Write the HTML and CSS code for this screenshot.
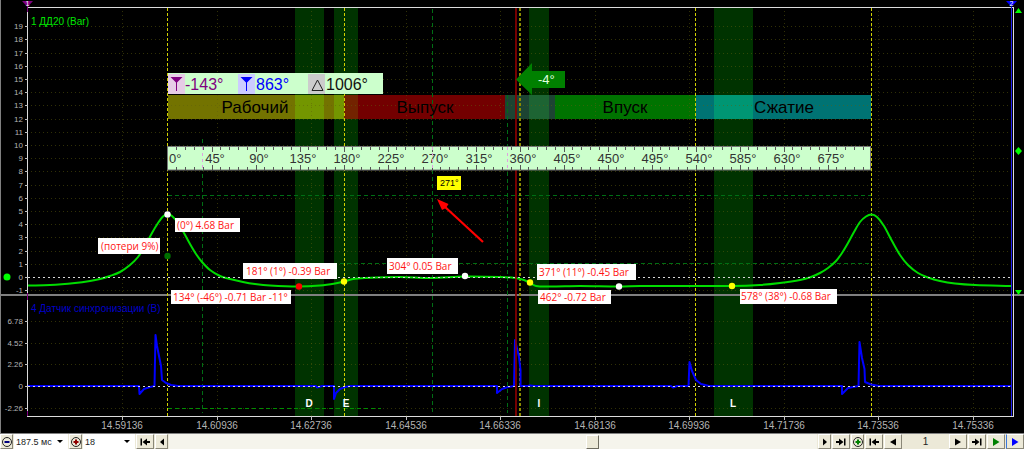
FILE: index.html
```html
<!DOCTYPE html>
<html lang="ru">
<head>
<meta charset="utf-8">
<title>Осциллограмма ДД20</title>
<link rel="stylesheet" href="styles.css">
</head>
<body>
<main class="scope">
  <svg class="plot" viewBox="0 0 1024 434" role="img" aria-label="Давление в цилиндре и синхронизация">
    <rect class="edge" x="0" y="0" width="1" height="434"/>
    <rect class="edge" x="0" y="433" width="1024" height="1"/>

    <g class="bands">
      <rect x="295" y="8" width="29" height="408"/>
      <rect x="334" y="8" width="24" height="408"/>
      <rect x="529" y="8" width="20" height="408"/>
      <rect x="714" y="8" width="39" height="408"/>
    </g>

    <g class="stages">
      <rect x="168" y="95" width="176" height="24" fill="#737300"/>
      <rect x="295" y="95" width="29" height="24" fill="#739600"/>
      <rect x="334" y="95" width="10" height="24" fill="#739600"/>
      <rect x="344" y="95" width="161" height="24" fill="#730000"/>
      <rect x="344" y="95" width="14" height="24" fill="#732300"/>
      <rect x="505" y="95" width="50" height="24" fill="#1d4433"/>
      <rect x="529" y="95" width="20" height="24" fill="#1d6433"/>
      <rect x="555" y="95" width="141" height="24" fill="#007300"/>
      <rect x="696" y="95" width="175" height="24" fill="#007373"/>
      <rect x="714" y="95" width="39" height="24" fill="#009673"/>
    </g>

    <g id="grid" class="grid"></g>
    <rect class="edge" x="0" y="294" width="1024" height="2"/>

    <g class="guides">
      <path d="M202.500 139V413M432.500 9V413M507.500 95V413M168 195.500H871M305 263.500H871"/>
      <path class="guide-low" d="M168 408.500H381"/>
    </g>

    <g class="phases">
      <path d="M167.500 8V416M344.500 8V416M695.500 8V416M871.500 8V416"/>
      <path class="phase-mid" d="M520 8V416"/>
    </g>

    <path id="pressure" class="pressure"/>
    <path class="sync" d="M28 386H139L139.500 394L144 389L150 387L154.500 386L155.500 335L157 346L161 366L162 380L166 383L171 385L178 386H316L317 387.500L322 386H334V399L336 393L340 389L345 387L350 386H497V393L502 389L508 387L514 386L515 340L519 357L520.500 370V386H528L530 385.500L534 386H671L673 387.500L677 386H688.500L689.500 362L692 371L696 380L701 384L709 386H842V394L848 388L853 387L858.500 386L859.500 342L862 358L864.500 369L865 382L871 384.500L879 386H1011"/>
    <path class="zero" d="M28 277.500H1011M28 386.500H1011"/>
    <rect x="515" y="8" width="2" height="408" fill="#8b0000" opacity=".85"/>

    <path class="axis" d="M27.500 7V417M27 7.500H1013M27 416.500H1013M1013.500 7V417"/>
    <path d="M1011.500 7V416" stroke="#2222ee"/>
    <path d="M27.500 2V12M27.500 293V300M27.500 411V416" stroke="#800080"/>
    <path d="M22 1H33L27.500 7Z" fill="#800080"/>
    <text class="flag" x="27.500" y="6">1</text>
    <path d="M1006 1H1017L1011.500 7Z" fill="#0000ff"/>
    <text class="flag" x="1011.500" y="6">2</text>
    <g fill="#00ff00">
      <circle cx="7" cy="277" r="3.500"/>
      <path d="M1015 151L1018.500 147L1022 151L1018.500 155Z"/>
      <path d="M1015 290H1022L1018.500 295Z"/>
      <path d="M1015 13H1022L1018.500 8Z"/>
    </g>
    <g id="scales" class="scales"></g>
    <text class="title title-main" x="31" y="25">1 ДД20 (Bar)</text>
    <text class="title title-sync" x="31" y="312">4 Датчик синхронизации (В)</text>

    <g class="stage-names">
      <text x="255" y="113">Рабочий</text>
      <text x="425" y="113">Выпуск</text>
      <text x="625" y="113">Впуск</text>
      <text x="784" y="113">Сжатие</text>
    </g>

    <g class="cursors">
      <rect x="168" y="73" width="215" height="21" fill="#ccffcc"/>
      <rect x="168" y="74" width="17" height="20" fill="#e6cce6"/>
      <path d="M170.500 77H182.500L177 82.500V91H176V82.500Z" fill="#800080"/>
      <text x="185" y="90" fill="#800080">-143°</text>
      <rect x="238" y="74" width="17" height="20" fill="#ccccff"/>
      <path d="M240.500 77H252.500L247 82.500V91H246V82.500Z" fill="#0000ff"/>
      <text x="256" y="90" fill="#0000ff">863°</text>
      <rect x="308" y="74" width="17" height="20" fill="#cccccc"/>
      <path d="M312 90.500H323L317.500 80Z" fill="none" stroke="#222"/>
      <text x="326" y="90" fill="#111">1006°</text>
    </g>

    <path d="M516 79.500L532 63V71H565V88H532V95Z" fill="#008000"/>
    <text class="shift" x="538" y="84">-4°</text>

    <rect x="167.500" y="146.500" width="703" height="23.500" fill="#ccffcc" stroke="#777"/>
    <g id="ruler" class="ruler"></g>
    <path class="ruler-guides" d="M202.500 147V170M432.500 147V170M507.500 147V170"/>

    <g class="notes">
      <g><rect x="98" y="238" width="62" height="16"/><text x="101" y="250">(потери 9%)</text></g>
      <g><rect x="175" y="218" width="65" height="14"/><text x="177" y="229">(0°) 4.68 Bar</text></g>
      <g><rect x="243" y="263" width="94" height="16"/><text x="246" y="275">181° (1°) -0.39 Bar</text></g>
      <g><rect x="171" y="290" width="120" height="14"/><text x="173" y="301">134° (-46°) -0.71 Bar -11°</text></g>
      <g><rect x="387" y="258" width="71" height="16"/><text x="389" y="270">304° 0.05 Bar</text></g>
      <g><rect x="537" y="264" width="99" height="16"/><text x="539" y="276">371° (11°) -0.45 Bar</text></g>
      <g><rect x="538" y="290" width="73" height="14"/><text x="540" y="301">462° -0.72 Bar</text></g>
      <g><rect x="740" y="289" width="97" height="15"/><text x="741" y="300">578° (38°) -0.68 Bar</text></g>
    </g>

    <g class="dots">
      <circle cx="167.500" cy="214.500" r="3.200" fill="#fff"/>
      <circle cx="167.500" cy="256" r="3.200" fill="#007000"/>
      <circle cx="299" cy="286.500" r="3.200" fill="#f00"/>
      <circle cx="344" cy="281.500" r="3.200" fill="#ff0"/>
      <circle cx="465" cy="276" r="3.200" fill="#fff"/>
      <circle cx="530" cy="282.500" r="3.200" fill="#ff0"/>
      <circle cx="619" cy="286.500" r="3.200" fill="#fff"/>
      <circle cx="732" cy="286" r="3.200" fill="#ff0"/>
    </g>

    <rect x="437" y="176" width="24" height="14" fill="#ffff00"/>
    <text class="hint" x="440" y="186">271°</text>
    <path d="M483 242L444 206" stroke="#f00" stroke-width="2.200"/>
    <path d="M437 199L448.500 204L446 208L442 210Z" fill="#f00"/>

    <g class="valves">
      <text x="309" y="407">D</text>
      <text x="346" y="407">E</text>
      <text x="539" y="407">I</text>
      <text x="733" y="407">L</text>
    </g>
  </svg>

  <div class="toolbar">
    <button class="key round" type="button" aria-label="Сжать">
      <svg viewBox="0 0 12 12"><circle cx="6" cy="6" r="4.500" fill="none" stroke="#222"/><path d="M3.500 6H8.500" stroke="#000080" stroke-width="2"/></svg>
    </button>
    <label class="combo combo-time"><select aria-label="Развёртка"><option>187.5 мс</option></select></label>
    <button class="key round" type="button" aria-label="Растянуть">
      <svg viewBox="0 0 12 12"><circle cx="6" cy="6" r="4.500" fill="none" stroke="#222"/><path d="M3.500 6H8.500M6 3.500V8.500" stroke="#900000" stroke-width="2"/></svg>
    </button>
    <label class="combo combo-scale"><select aria-label="Масштаб"><option>18</option></select></label>
    <button class="key wide" type="button" aria-label="В начало">
      <svg viewBox="0 0 12 12"><path d="M1.500 2.500H3V9.500H1.500ZM8 2.500V9.500L3.500 6ZM8 5H11V7H8Z"/></svg>
    </button>
    <button class="key" type="button" aria-label="Влево">
      <svg viewBox="0 0 12 12"><path d="M8 2.500V9.500L4 6Z"/></svg>
    </button>
    <input class="scroll" type="range" min="0" max="1000" value="656" aria-label="Прокрутка">
    <button class="key" type="button" aria-label="Вправо">
      <svg viewBox="0 0 12 12"><path d="M4 2.500V9.500L8 6Z"/></svg>
    </button>
    <button class="key wide" type="button" aria-label="В конец">
      <svg viewBox="0 0 12 12"><path d="M10.500 2.500H9V9.500H10.500ZM4 2.500V9.500L8.500 6ZM4 5H1V7H4Z"/></svg>
    </button>
    <button class="key round" type="button" aria-label="Добавить метку">
      <svg viewBox="0 0 12 12"><circle cx="6" cy="6" r="4.500" fill="none" stroke="#222"/><path d="M3.500 6H8.500M6 3.500V8.500" stroke="#008000" stroke-width="2"/></svg>
    </button>
    <button class="key wide" type="button" aria-label="Первый кадр">
      <svg viewBox="0 0 12 12"><path d="M1.500 2.500H3V9.500H1.500ZM8 2.500V9.500L3.500 6ZM8 5H11V7H8Z"/></svg>
    </button>
    <button class="key wide" type="button" aria-label="Предыдущий кадр">
      <svg viewBox="0 0 12 12"><path d="M9 2.500V9.500L3 6Z"/></svg>
    </button>
    <output class="frame">1</output>
    <button class="key wide" type="button" aria-label="Следующий кадр">
      <svg viewBox="0 0 12 12"><path d="M3 2.500V9.500L9 6Z"/></svg>
    </button>
    <button class="key wide" type="button" aria-label="Последний кадр">
      <svg viewBox="0 0 12 12"><path d="M10.500 2.500H9V9.500H10.500ZM4 2.500V9.500L8.500 6ZM4 5H1V7H4Z"/></svg>
    </button>
    <button class="key wide play" type="button" aria-label="Воспроизвести">
      <svg viewBox="0 0 12 12"><path d="M3 2V10L9.500 6Z"/></svg>
    </button>
    <button class="key wide live" type="button" aria-label="Запись">
      <svg viewBox="0 0 12 12"><path d="M3 2V10L9.500 6Z"/></svg>
    </button>
  </div>
</main>
<script src="plot.js"></script>
</body>
</html>
```
FILE: styles.css
```css
* {
  box-sizing: border-box;
}

body {
  margin: 0;
  background: #000;
  font-family: "Liberation Sans", Arial, sans-serif;
}

.scope {
  display: flex;
  flex-direction: column;
}

.plot {
  display: block;
  width: 100%;
  height: auto;
  background: #000;
}

.edge { fill: #808080; }
.bands { fill: #003300; }

.grid path {
  stroke: #60600c;
  stroke-opacity: .5;
  stroke-dasharray: 1 3;
  fill: none;
}

.guides path {
  stroke: #006e14;
  stroke-dasharray: 4 3;
  fill: none;
}

.guides .guide-low { stroke: #008c00; }

.phases path {
  stroke: #d2d200;
  stroke-dasharray: 3 2;
}

.phases .phase-mid {
  stroke: #8c8c00;
  stroke-width: 2;
}

.pressure {
  fill: none;
  stroke: #00dc00;
  stroke-width: 2;
}

.sync {
  fill: none;
  stroke: #0000ff;
  stroke-width: 2;
  stroke-linejoin: round;
}

.zero {
  stroke: #d8d8d8;
  stroke-dasharray: 2 3;
}

.axis {
  stroke: #dcdcdc;
  fill: none;
}

.scales path { stroke: #c0c0c0; }

.scales text {
  font-size: 8px;
  fill: #b4b4b4;
  text-anchor: end;
}

.scales .time {
  font-size: 10px;
  text-anchor: middle;
}

.flag {
  font-size: 7px;
  fill: #fff;
  text-anchor: middle;
}

.title { font-size: 10px; }
.title-main { fill: #00e600; }
.title-sync { fill: #0000c8; }

.stage-names text {
  font-size: 17px;
  fill: #000;
  text-anchor: middle;
}

.cursors text { font-size: 16px; }

.shift {
  font-size: 13px;
  fill: #e0ffe0;
}

.ruler path { stroke: #555; }

.ruler text {
  font-size: 13px;
  fill: #333;
  text-anchor: middle;
}

.ruler .origin { text-anchor: start; }

.ruler-guides {
  stroke: #e0a0e0;
  stroke-dasharray: 3 3;
}

.notes rect { fill: #fff; }

.notes text {
  font-family: "Open Sans", "Noto Sans", sans-serif;
  font-size: 10px;
  fill: #ff1414;
}

.hint {
  font-size: 9px;
  fill: #000;
}

.valves text {
  font-size: 10px;
  font-weight: bold;
  fill: #fff;
  text-anchor: middle;
}

.toolbar {
  display: flex;
  height: 15px;
  gap: 1px;
  background: #ece9d8;
}

.key {
  display: flex;
  flex: none;
  align-items: center;
  justify-content: center;
  width: 13px;
  padding: 0;
  border: 1px solid;
  border-color: #fff #8a8778 #8a8778 #fff;
  background: #ece9d8;
}

.key svg {
  flex: none;
  width: 12px;
  height: 12px;
  fill: #000;
}

.wide { width: 18px; }
.play svg { fill: #008000; }
.live svg { fill: #0000ff; }
.live { border-left-color: #3c78dc; }

.combo {
  position: relative;
  flex: none;
  background: #fff;
}

.combo-time { width: 54px; }
.combo-scale { width: 52px; }

.combo::after {
  content: "";
  position: absolute;
  top: 6px;
  right: 5px;
  border: 3px solid transparent;
  border-top-color: #000;
  border-bottom: 0;
  pointer-events: none;
}

.combo select {
  display: block;
  width: 100%;
  height: 100%;
  padding: 0 2px;
  border: 0;
  appearance: none;
  background: transparent;
  color: #222;
  font: 9px "Liberation Sans", Arial, sans-serif;
}

.scroll {
  flex: 1;
  min-width: 0;
  height: 100%;
  margin: 0;
  appearance: none;
  background: #f5f4ec;
}

.scroll::-webkit-slider-thumb {
  appearance: none;
  width: 13px;
  height: 14px;
  border: 1px solid;
  border-color: #fff #6e6c60 #6e6c60 #fff;
  background: #ece9d8;
}

.frame {
  flex: none;
  width: 45px;
  color: #222;
  font-size: 10px;
  line-height: 15px;
  text-align: center;
}
```
FILE: plot.js
```js
const NS = "http://www.w3.org/2000/svg";

function add(parent, tag, attrs, text) {
  const el = document.createElementNS(NS, tag);
  for (const key in attrs) el.setAttribute(key, attrs[key]);
  if (text !== undefined) el.textContent = text;
  parent.appendChild(el);
}

const grid = document.getElementById("grid");
const scales = document.getElementById("scales");
const ruler = document.getElementById("ruler");

// Pressure scale, one division per bar
for (let bar = -1; bar <= 19; bar++) {
  const y = Math.round(277 - bar * 13.2);
  if (bar !== 0) add(grid, "path", { d: `M31 ${y + 0.5}H1011` });
  add(scales, "path", { d: `M25 ${y + 0.5}H28` });
  add(scales, "text", { x: 23, y: y + 3 }, bar);
}

// Sync sensor scale
[["6.78", 321], ["4.52", 343], ["2.26", 364], ["0", 386], ["-2.26", 408]].forEach(([label, y]) => {
  if (label !== "0") add(grid, "path", { d: `M31 ${y + 0.5}H1011` });
  add(scales, "path", { d: `M25 ${y + 0.5}H28` });
  add(scales, "text", { x: 23, y: y + 3 }, label);
});

// Time scale
for (let i = 0; i < 10; i++) {
  const x = Math.round(122 + i * 94.55);
  add(grid, "path", { d: `M${x + 0.5} 11V416` });
  add(scales, "path", { d: `M${x + 0.5} 416V420` });
  add(scales, "text", { x, y: 429, class: "time" }, (14.59136 + i * 0.018).toFixed(5));
}

// Crank angle ruler, a tick every 9 degrees
for (let deg = 9; deg < 720; deg += 9) {
  const x = Math.round(167.5 + deg * 704 / 720) + 0.5;
  const len = deg % 45 ? 3 : 5;
  add(ruler, "path", { d: `M${x} 147V${147 + len}M${x} 170V${170 - len}` });
}
add(ruler, "text", { x: 169, y: 163, class: "origin" }, "0°");
for (let deg = 45; deg < 720; deg += 45) {
  add(ruler, "text", { x: 171 + deg * 704 / 720, y: 163 }, deg + "°");
}

// Cylinder pressure trace
const points = [
  [28, 285.5], [50, 285], [75, 283], [90, 281], [100, 279], [110, 276], [120, 272],
  [130, 265], [138, 257], [145, 246], [152, 233], [158, 223], [163, 216.5], [167.5, 214],
  [172, 216], [178, 223], [184, 233], [190, 244], [196, 254], [202, 262], [210, 270],
  [220, 276], [230, 279], [243, 282], [255, 284], [270, 285.5], [298, 286.5],
  [320, 285.5], [335, 283.5], [344, 281.5], [353, 279], [365, 278], [400, 277],
  [430, 278], [465, 276.5], [500, 277], [515, 278], [524, 280], [530, 283], [536, 286],
  [550, 286.5], [580, 286], [619, 286.5], [640, 286], [732, 286], [760, 285],
  [780, 283], [800, 280], [811, 277], [820, 273], [828, 268], [836, 261], [842, 253],
  [848, 243], [854, 232], [860, 222], [866, 216.5], [871.5, 214.5], [877, 217],
  [884, 226], [892, 241], [900, 255], [908, 265], [918, 273], [928, 277.5],
  [940, 281], [955, 283.5], [975, 285], [1011, 286]
];
let trace = `M${points[0]}`;
for (let i = 0; i < points.length - 1; i++) {
  const a = points[i - 1] || points[i];
  const b = points[i];
  const c = points[i + 1];
  const d = points[i + 2] || c;
  // Control points stay inside the segment so that the trace never folds back
  const h = (c[0] - b[0]) / 3;
  const s1 = c[0] === a[0] ? 0 : (c[1] - a[1]) / (c[0] - a[0]);
  const s2 = d[0] === b[0] ? 0 : (d[1] - b[1]) / (d[0] - b[0]);
  trace += `C${b[0] + h} ${b[1] + h * s1} ${c[0] - h} ${c[1] - h * s2} ${c[0]} ${c[1]}`;
}
document.getElementById("pressure").setAttribute("d", trace);
```
